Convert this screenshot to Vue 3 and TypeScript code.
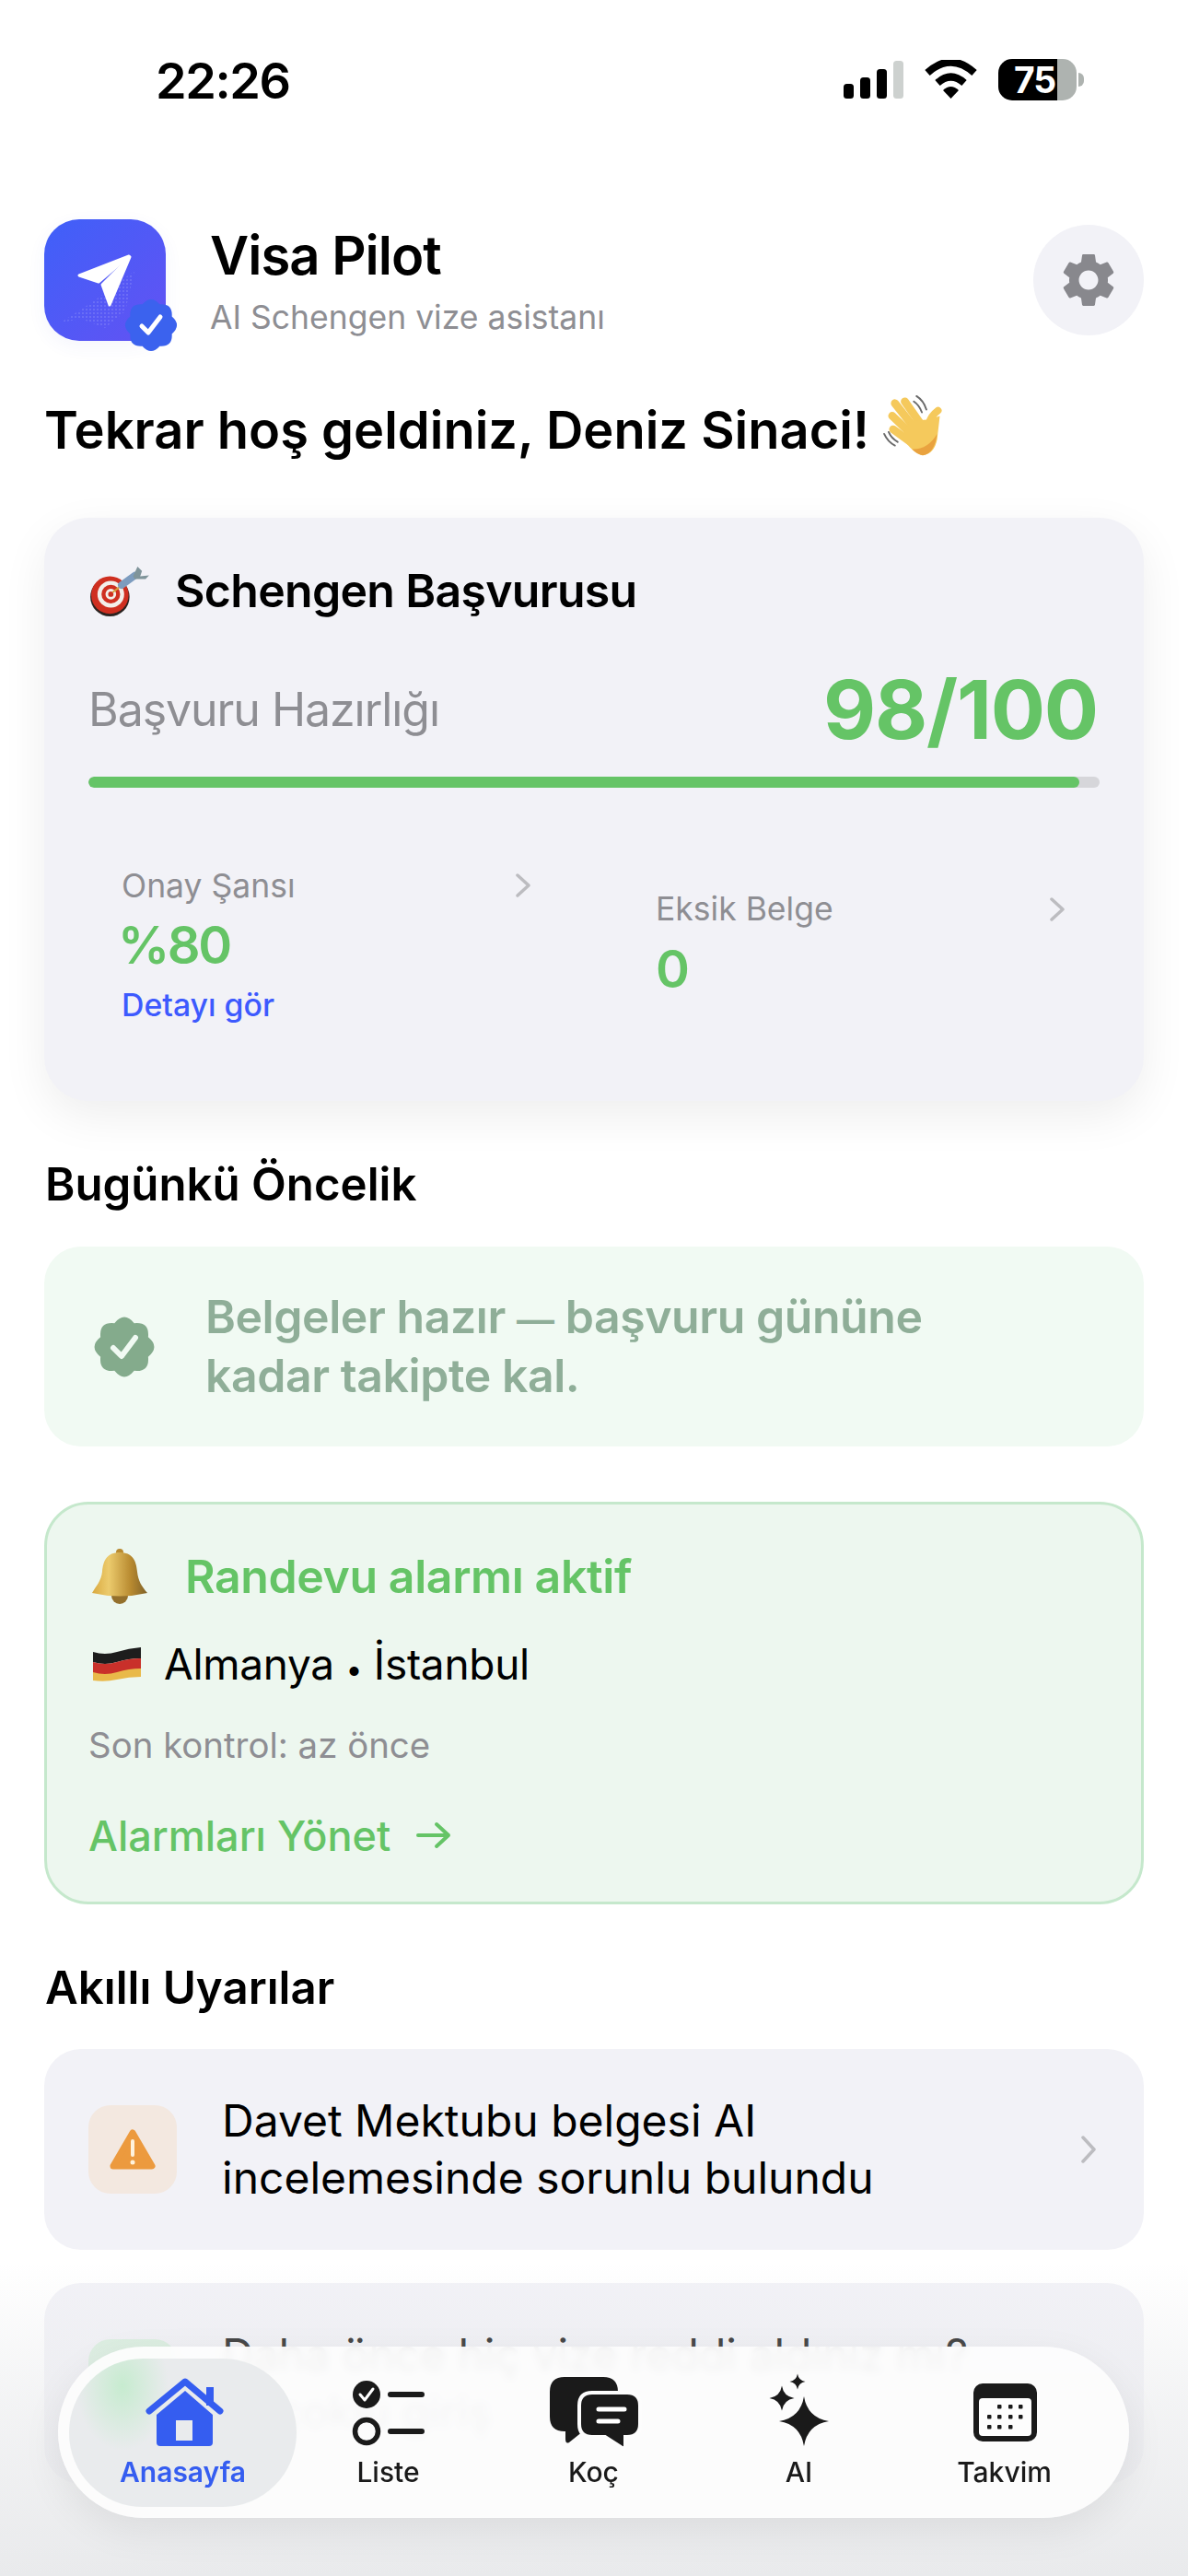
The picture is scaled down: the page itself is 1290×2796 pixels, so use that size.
<template>
  <div class="page">
    <div class="status-bar">
      <span class="time">22:26</span>
      <div class="status-icons">
        <svg class="signal" viewBox="0 0 65 41">
          <rect x="0" y="25" width="11" height="16" rx="3.5" fill="#000" />
          <rect x="18" y="18" width="11" height="23" rx="3.5" fill="#000" />
          <rect x="36" y="9" width="11" height="32" rx="3.5" fill="#000" />
          <rect x="54" y="0" width="11" height="41" rx="3.5" fill="#cdd1cf" />
        </svg>
        <svg class="wifi" viewBox="0 0 57 42">
          <path d="M3 14 Q28.5 -9 54 14" fill="none" stroke="#000" stroke-width="8" />
          <path d="M14 25 Q28.5 12 43 25" fill="none" stroke="#000" stroke-width="8" />
          <path d="M20 33 Q28.5 25 37 33 L28.5 42 Z" fill="#000" />
        </svg>
        <div class="battery">
          <span class="battery-num">75</span>
          <i class="battery-tip"></i>
        </div>
      </div>
    </div>

    <header class="header">
      <div class="logo">
        <svg class="logo-art" viewBox="0 0 132 132">
          <defs>
            <linearGradient id="logoBg" x1="0" y1="0" x2="1" y2="1">
              <stop offset="0" stop-color="#3f60f9" />
              <stop offset="1" stop-color="#6352f3" />
            </linearGradient>
            <pattern id="logoDots" width="4" height="4" patternUnits="userSpaceOnUse">
              <circle cx="2" cy="2" r="0.7" fill="#fff" />
            </pattern>
          </defs>
          <rect width="132" height="132" rx="38" fill="url(#logoBg)" />
          <path d="M18 112 L55 88 L98 56 L88 100 L66 118 L40 108 Z" fill="url(#logoDots)" opacity="0.35" />
          <path d="M92 40 L38 61 L59 68 Z" fill="#fff" stroke="#fff" stroke-width="3" stroke-linejoin="round" />
          <path d="M93 41 L63 71 L71 93 Z" fill="#fff" stroke="#fff" stroke-width="3" stroke-linejoin="round" />
        </svg>
        <svg class="logo-badge" viewBox="0 0 60 60">
          <path :d="scallop(30, 30, 29, 24.5)" fill="#3b62ee" />
          <path d="M20 31 L27 38 L40 21" fill="none" stroke="#fff" stroke-width="5" stroke-linecap="round" stroke-linejoin="round" />
        </svg>
      </div>
      <div class="brand">
        <div class="brand-name">Visa Pilot</div>
        <div class="brand-sub">AI Schengen vize asistanı</div>
      </div>
      <button class="settings">
        <svg viewBox="0 0 24 24" class="gear">
          <path
            fill="#88888d"
            d="M19.14 12.94c.04-.3.06-.61.06-.94 0-.32-.02-.64-.07-.94l2.03-1.58c.18-.14.23-.41.12-.61l-1.92-3.32c-.12-.22-.37-.29-.59-.22l-2.39.96c-.5-.38-1.03-.7-1.62-.94l-.36-2.54c-.04-.24-.24-.41-.48-.41h-3.84c-.24 0-.43.17-.47.41l-.36 2.54c-.59.24-1.13.57-1.62.94l-2.39-.96c-.22-.08-.47 0-.59.22L2.74 8.87c-.12.21-.08.47.12.61l2.03 1.58c-.05.3-.09.63-.09.94s.02.64.07.94l-2.03 1.58c-.18.14-.23.41-.12.61l1.92 3.32c.12.22.37.29.59.22l2.39-.96c.5.38 1.03.7 1.62.94l.36 2.54c.05.24.24.41.48.41h3.84c.24 0 .44-.17.47-.41l.36-2.54c.59-.24 1.13-.56 1.62-.94l2.39.96c.22.08.47 0 .59-.22l1.92-3.32c.12-.22.07-.47-.12-.61l-2.01-1.58zM12 15.6c-1.98 0-3.6-1.62-3.6-3.6s1.62-3.6 3.6-3.6 3.6 1.62 3.6 3.6-1.62 3.6-3.6 3.6z"
          />
        </svg>
      </button>
    </header>

    <h1 class="greeting">
      <span>Tekrar hoş geldiniz, Deniz Sinaci!</span>
      <svg class="wave" viewBox="0 0 90 80">
        <g fill="none" stroke="#6a6a6a" stroke-width="2" stroke-linecap="round">
          <path d="M38 2 Q46 7 49 17" />
          <path d="M35 8 Q41 12 44 20" />
          <path d="M2 44 Q6 53 14 57" />
          <path d="M7 42 Q10 49 17 53" />
        </g>
        <g fill="none" stroke="#f5c95c" stroke-width="9" stroke-linecap="round">
          <path d="M25 8 L42 32" />
          <path d="M14 10 L33 34" />
          <path d="M11 24 L30 42" />
          <path d="M12 39 L30 52" />
          <path d="M52 32 Q54 24 62 18" stroke-width="8" />
        </g>
        <path d="M30 30 L52 28 L64 24 L61 50 Q58 66 45 68 Q34 66 22 48 Z" fill="#f5c95c" />
        <path d="M61 44 Q58 66 45 68 Q39 67 33 61 Q50 62 61 44 Z" fill="#e9a23f" />
      </svg>
    </h1>

    <section class="card main-card">
      <div class="main-title">
        <svg class="target" viewBox="0 0 66 60">
          <circle cx="22" cy="36" r="22" fill="#2b2320" />
          <circle cx="22" cy="34" r="21" fill="#cf2f20" />
          <circle cx="23" cy="33" r="15" fill="#f3efea" />
          <circle cx="23" cy="33" r="10.5" fill="#cf2f20" />
          <circle cx="23" cy="33" r="6" fill="#f3efea" />
          <circle cx="23" cy="33" r="3" fill="#cf2f20" />
          <path d="M25 31 L38 21" stroke="#d8a23c" stroke-width="2" />
          <path d="M35 23 L50 12" stroke="#7d9cbf" stroke-width="8" stroke-linecap="round" />
          <path d="M48 13 L53 2 L58 7 L56 13 L66 12 L62 16 L50 16 Z" fill="#7f949a" />
        </svg>
        <h2>Schengen Başvurusu</h2>
      </div>
      <div class="readiness">
        <span class="readiness-label">Başvuru Hazırlığı</span>
        <span class="readiness-score">{{ score }}/100</span>
      </div>
      <div class="progress">
        <div class="progress-fill" :style="{ width: score + '%' }"></div>
      </div>
      <div class="stats">
        <div class="stat">
          <div class="stat-label">
            <span>Onay Şansı</span>
            <svg class="chevron" viewBox="0 0 16 26"><path d="M2 2 L14 13 L2 24" /></svg>
          </div>
          <div class="stat-value stat-percent">%80</div>
          <div class="stat-link">Detayı gör</div>
        </div>
        <div class="stat">
          <div class="stat-label">
            <span>Eksik Belge</span>
            <svg class="chevron" viewBox="0 0 16 26"><path d="M2 2 L14 13 L2 24" /></svg>
          </div>
          <div class="stat-value">0</div>
        </div>
      </div>
    </section>

    <h3 class="section-title">Bugünkü Öncelik</h3>
    <section class="card priority">
      <svg class="priority-icon" viewBox="0 0 68 68">
        <path :d="scallop(34, 34, 33.5, 28)" fill="#84ab8c" />
        <path d="M22 35 L31 44 L46 24" fill="none" stroke="#f1faf3" stroke-width="6" stroke-linecap="round" stroke-linejoin="round" />
      </svg>
      <p>Belgeler hazır <span class="dash">—</span> başvuru gününe<br />kadar takipte kal.</p>
    </section>

    <section class="card alarm">
      <div class="alarm-head">
        <svg class="bell" viewBox="0 0 64 62">
          <defs>
            <linearGradient id="bellGold" x1="0" y1="0" x2="1" y2="0">
              <stop offset="0" stop-color="#d9a93f" />
              <stop offset="0.3" stop-color="#eccb6d" />
              <stop offset="0.7" stop-color="#b88a30" />
              <stop offset="1" stop-color="#7f6128" />
            </linearGradient>
          </defs>
          <circle cx="32" cy="52" r="9" fill="#94702c" />
          <circle cx="32" cy="5" r="4" fill="#b88a30" />
          <path d="M32 5 C18 5 14 14 13 26 C12 36 6 42 2 49 Q32 56 62 49 C56 42 52 36 51 26 C50 14 46 5 32 5 Z" fill="url(#bellGold)" />
        </svg>
        <span>Randevu alarmı aktif</span>
      </div>
      <div class="alarm-place">
        <svg class="flag" viewBox="0 0 54 38">
          <path d="M1 6 Q14 10 27 6 T53 1 V13 Q40 13 27 17 T1 17 Z" fill="#1d1d1d" />
          <path d="M1 17 Q14 21 27 17 T53 13 V25 Q40 25 27 29 T1 29 Z" fill="#c9302a" />
          <path d="M1 28 Q14 32 27 28 T53 24 V33 Q40 33 27 36 T1 37 Z" fill="#e9b949" />
        </svg>
        <span>Almanya <span class="dot">•</span> İstanbul</span>
      </div>
      <div class="alarm-check">Son kontrol: az önce</div>
      <div class="alarm-link">
        <span>Alarmları Yönet</span>
        <svg class="arrow" viewBox="0 0 38 30">
          <path d="M2 15 H35 M22 3 L35 15 L22 27" fill="none" stroke="#65c466" stroke-width="4" stroke-linecap="round" stroke-linejoin="round" />
        </svg>
      </div>
    </section>

    <h3 class="section-title">Akıllı Uyarılar</h3>
    <section class="card alert">
      <div class="alert-icon">
        <svg viewBox="0 0 50 46" class="warn">
          <path d="M25 5 L46 41 H4 Z" fill="#ec9a3e" stroke="#ec9a3e" stroke-width="7" stroke-linejoin="round" />
          <path d="M25 14 V29" stroke="#fff3dd" stroke-width="4" stroke-linecap="round" />
          <circle cx="25" cy="37" r="2.5" fill="#fff3dd" />
        </svg>
      </div>
      <p>Davet Mektubu belgesi AI<br />incelemesinde sorunlu bulundu</p>
      <svg class="chevron alert-chevron" viewBox="0 0 16 30"><path d="M2 2 L14 15 L2 28" /></svg>
    </section>
    <section class="card alert">
      <div class="alert-icon alert-icon-green"></div>
      <p>Daha önce hiç vize reddi aldınız mı?<br />AI çoklu giriş</p>
    </section>

    <div class="bottom-fade"></div>

    <nav class="tabbar">
      <div class="tab tab-active">
        <svg viewBox="0 0 100 84" class="tab-icon">
          <rect x="75" y="16" width="8" height="20" fill="#355df0" />
          <path d="M52 20 L82 46 V76 Q82 80 78 80 H25 Q21 80 21 76 V46 Z" fill="#355df0" />
          <rect x="42" y="52" width="18" height="22" fill="#e9ebed" />
          <path d="M13 42 L52 10 L90 42" fill="none" stroke="#355df0" stroke-width="7" stroke-linecap="round" stroke-linejoin="round" />
        </svg>
        <span>Anasayfa</span>
      </div>
      <div class="tab">
        <svg viewBox="0 0 100 84" class="tab-icon">
          <circle cx="26" cy="24" r="15" fill="#1a1a1a" />
          <path d="M19 24 L24 30 L33 18" fill="none" stroke="#fff" stroke-width="3" stroke-linecap="round" stroke-linejoin="round" />
          <circle cx="26" cy="64" r="12.5" fill="none" stroke="#1a1a1a" stroke-width="5.5" />
          <path d="M52 24 H86 M52 64 H86" stroke="#1a1a1a" stroke-width="6" stroke-linecap="round" />
        </svg>
        <span>Liste</span>
      </div>
      <div class="tab">
        <svg viewBox="0 0 100 84" class="tab-icon">
          <path d="M18 5 H60 Q76 5 76 21 V48 Q76 64 60 64 H38 L23 76 Q19 78 19 72 V64 H18 Q2 64 2 48 V21 Q2 5 18 5 Z" fill="#1a1a1a" />
          <path d="M48 22 H86 Q100 22 100 36 V56 Q100 70 86 70 H84 V79 Q84 84 79 81 L62 70 H48 Q34 70 34 56 V36 Q34 22 48 22 Z" fill="#1a1a1a" stroke="#fdfdfd" stroke-width="4" />
          <path d="M55 40 H83 M55 53 H76" stroke="#fff" stroke-width="5" stroke-linecap="round" />
        </svg>
        <span>Koç</span>
      </div>
      <div class="tab">
        <svg viewBox="0 0 100 84" class="tab-icon">
          <path :d="star(55, 53, 27)" fill="#1a1a1a" />
          <path :d="star(31, 28, 13.5)" fill="#1a1a1a" />
          <path :d="star(48, 10, 8.5)" fill="#1a1a1a" />
        </svg>
        <span>AI</span>
      </div>
      <div class="tab">
        <svg viewBox="0 0 100 84" class="tab-icon">
          <rect x="16" y="12" width="69" height="63" rx="10" fill="#1a1a1a" />
          <rect x="22" y="28" width="57" height="41" rx="4" fill="#fdfdfd" />
          <rect
            v-for="d in calendarDots"
            :key="d.x + '-' + d.y"
            :x="d.x - 2"
            :y="d.y - 2"
            width="4.5"
            height="4.5"
            rx="1"
            fill="#1a1a1a"
          />
        </svg>
        <span>Takvim</span>
      </div>
    </nav>
  </div>
</template>

<script setup lang="ts">
const score = 98;

const calendarDots = [
  { x: 44, y: 37 },
  { x: 56, y: 37 },
  { x: 67, y: 37 },
  { x: 33, y: 48 },
  { x: 44, y: 48 },
  { x: 56, y: 48 },
  { x: 67, y: 48 },
  { x: 33, y: 59 },
  { x: 44, y: 59 },
  { x: 56, y: 59 },
];

// verified-style badge outline, 8 soft bumps
function scallop(cx: number, cy: number, outer: number, inner: number): string {
  const n = 8;
  const ctrl = outer * 2 - inner;
  const at = (r: number, a: number) => `${cx + r * Math.cos(a)} ${cy + r * Math.sin(a)}`;
  const step = (Math.PI * 2) / n;
  let d = `M${at(inner, -Math.PI / 2 - step / 2)}`;
  for (let i = 0; i < n; i++) {
    const a = i * step - Math.PI / 2;
    d += `Q${at(ctrl, a)} ${at(inner, a + step / 2)}`;
  }
  return d + "Z";
}

function star(cx: number, cy: number, r: number): string {
  const k = r * 0.14;
  return (
    `M${cx} ${cy - r}Q${cx + k} ${cy - k} ${cx + r} ${cy}` +
    `Q${cx + k} ${cy + k} ${cx} ${cy + r}` +
    `Q${cx - k} ${cy + k} ${cx - r} ${cy}` +
    `Q${cx - k} ${cy - k} ${cx} ${cy - r}Z`
  );
}
</script>

<style scoped>
.page {
  position: relative;
  width: 1290px;
  height: 2796px;
  overflow: hidden;
  box-sizing: border-box;
  padding: 0 48px;
  background: #fff;
  font-family: Inter, "Liberation Sans", sans-serif;
  color: #000;
}

.status-bar {
  height: 237px;
  box-sizing: border-box;
  padding: 57px 73px 0 121px;
  display: flex;
  justify-content: space-between;
  align-items: flex-start;
}
.time {
  font-size: 54px;
  line-height: 62px;
  font-weight: 600;
  letter-spacing: -1.4px;
}
.status-icons {
  display: flex;
  align-items: flex-start;
  padding-top: 8px;
}
.signal {
  width: 65px;
  height: 41px;
  margin-top: 1px;
}
.wifi {
  width: 57px;
  height: 42px;
  margin-left: 23px;
}
.battery {
  position: relative;
  width: 85px;
  height: 45px;
  margin-left: 23px;
  margin-top: -1px;
  border-radius: 15px;
  background: linear-gradient(90deg, #000 75%, #aeb3b0 75%);
  display: flex;
  align-items: center;
}
.battery-num {
  padding-left: 17px;
  color: #fff;
  font-size: 39px;
  font-weight: 700;
  line-height: 45px;
  letter-spacing: -1px;
}
.battery-tip {
  position: absolute;
  left: 87px;
  top: 15px;
  width: 6px;
  height: 15px;
  border-radius: 0 8px 8px 0;
  background: #aeb3b0;
}

.header {
  display: flex;
  align-items: center;
  height: 133px;
}
.logo {
  position: relative;
  width: 132px;
  height: 132px;
  flex: none;
  border-radius: 38px;
  box-shadow: 0 6px 20px rgba(70, 80, 200, 0.06);
}
.logo-art {
  display: block;
  width: 132px;
  height: 132px;
}
.logo-badge {
  position: absolute;
  left: 86px;
  top: 85px;
  width: 60px;
  height: 60px;
}
.brand {
  margin-left: 48px;
  flex: 1;
}
.brand-name {
  font-size: 58px;
  line-height: 70px;
  font-weight: 600;
  letter-spacing: -1px;
}
.brand-sub {
  margin-top: 12px;
  font-size: 35.5px;
  line-height: 42px;
  color: #8e8e93;
}
.settings {
  width: 120px;
  height: 120px;
  border: none;
  border-radius: 50%;
  background: #f2f2f7;
  padding: 0;
  display: flex;
  align-items: center;
  justify-content: center;
}
.gear {
  width: 70px;
  height: 70px;
}

.greeting {
  margin: 61px 0 0;
  height: 72px;
  display: flex;
  align-items: center;
  gap: 14px;
  font-size: 56px;
  line-height: 72px;
  font-weight: 600;
}
.wave {
  width: 88px;
  height: 78px;
  flex: none;
}

.card {
  box-sizing: border-box;
  background: #f2f2f7;
}
.main-card {
  height: 633px;
  margin-top: 59px;
  padding: 50px 48px 0;
  border-radius: 48px;
  box-shadow: 0 16px 50px rgba(0, 0, 0, 0.07);
}
.main-title {
  display: flex;
  align-items: center;
  height: 60px;
}
.target {
  width: 64px;
  height: 58px;
  margin-left: 2px;
  flex: none;
}
.main-title h2 {
  margin: 0 0 0 28px;
  padding-bottom: 3px;
  font-size: 50px;
  line-height: 60px;
  font-weight: 600;
  letter-spacing: -0.7px;
}
.readiness {
  margin-top: 48px;
  height: 100px;
  display: flex;
  justify-content: space-between;
  align-items: center;
}
.readiness-label {
  font-size: 50px;
  color: #8e8e93;
  letter-spacing: -1.05px;
}
.readiness-score {
  padding-right: 2px;
  font-size: 88px;
  font-weight: 700;
  color: #65c466;
  letter-spacing: -1.2px;
}
.progress {
  margin-top: 23px;
  height: 12px;
  border-radius: 6px;
  background: #d6d6da;
  overflow: hidden;
}
.progress-fill {
  height: 100%;
  border-radius: 6px;
  background: #65c466;
}
.stats {
  margin-top: 61px;
  display: grid;
  grid-template-columns: 518px 518px;
  column-gap: 62px;
}
.stat {
  height: 219px;
  box-sizing: border-box;
  padding: 0 38px 0 36px;
  display: flex;
  flex-direction: column;
  justify-content: center;
}
.stat-label {
  display: flex;
  justify-content: space-between;
  align-items: center;
  height: 42px;
  font-size: 35.5px;
  color: #8e8e93;
}
.stat-value {
  margin-top: 10px;
  font-size: 56px;
  line-height: 68px;
  font-weight: 600;
  color: #65c466;
}
.stat-percent {
  margin-left: -4px;
  letter-spacing: -2.4px;
}
.stat-link {
  margin-top: 11px;
  font-size: 33.8px;
  line-height: 40px;
  font-weight: 500;
  color: #3d5afe;
}
.chevron {
  width: 16px;
  height: 26px;
  flex: none;
}
.chevron path {
  fill: none;
  stroke: #bcbcc0;
  stroke-width: 3.5;
  stroke-linecap: round;
  stroke-linejoin: round;
}

.section-title {
  margin: 63px 0 0;
  padding: 0 0 4px 1px;
  font-size: 49.2px;
  line-height: 54px;
  font-weight: 600;
}
.priority {
  margin-top: 37px;
  height: 217px;
  padding-left: 53px;
  border-radius: 40px;
  background: #f1faf3;
  display: flex;
  align-items: center;
  gap: 54px;
}
.priority-icon {
  width: 68px;
  height: 68px;
  flex: none;
}
.priority p {
  margin: 0;
  font-size: 50px;
  line-height: 61px;
  font-weight: 600;
  color: #8fae98;
  letter-spacing: -0.45px;
}
.dash {
  font-size: 41px;
}
.alarm {
  margin-top: 60px;
  height: 437px;
  padding: 48px 45px 0;
  border: 3px solid #c5e8cc;
  border-radius: 48px;
  background: #edf7ef;
}
.alarm-head {
  display: flex;
  align-items: center;
  height: 60px;
  font-size: 50px;
  font-weight: 600;
  color: #65c466;
  letter-spacing: -0.4px;
}
.bell {
  width: 64px;
  height: 62px;
  margin: 0 39px 0 2px;
  flex: none;
}
.alarm-place {
  margin-top: 37px;
  height: 56px;
  padding-bottom: 2px;
  display: flex;
  align-items: center;
  font-size: 46px;
  letter-spacing: -0.3px;
}
.dot {
  font-size: 32px;
}
.flag {
  width: 54px;
  height: 38px;
  margin: 0 24px 0 4px;
  flex: none;
}
.alarm-check {
  margin-top: 35px;
  font-size: 38.4px;
  line-height: 46px;
  color: #8e8e93;
}
.alarm-link {
  margin-top: 48px;
  height: 54px;
  display: flex;
  align-items: center;
  font-size: 45px;
  font-weight: 500;
  color: #65c466;
}
.arrow {
  width: 38px;
  height: 30px;
  margin-left: 28px;
}
.alert {
  position: relative;
  margin-top: 36px;
  height: 218px;
  padding-left: 48px;
  border-radius: 40px;
  display: flex;
  align-items: center;
  gap: 49px;
}
.alert-icon {
  width: 96px;
  height: 96px;
  flex: none;
  border-radius: 24px;
  background: #f3e8e0;
  display: flex;
  align-items: center;
  justify-content: center;
}
.alert-icon-green {
  background: #d6efdc;
}
.warn {
  width: 50px;
  height: 46px;
}
.alert p {
  margin: 0;
  font-size: 48px;
  line-height: 62px;
}
.alert-chevron {
  position: absolute;
  right: 52px;
  top: 94px;
  width: 16px;
  height: 30px;
}

.bottom-fade {
  position: absolute;
  left: 0;
  right: 0;
  bottom: 0;
  height: 340px;
  background: linear-gradient(180deg, rgba(233, 234, 236, 0) 0%, rgba(233, 234, 236, 0.55) 45%, #e9eaec 100%);
}
.tabbar {
  position: absolute;
  left: 63px;
  top: 2547px;
  width: 1163px;
  height: 186px;
  box-sizing: border-box;
  padding: 0 24px;
  border-radius: 93px;
  background: rgba(253, 253, 253, 0.93);
  backdrop-filter: blur(5px);
  box-shadow: 0 14px 44px rgba(0, 0, 0, 0.07);
  display: grid;
  grid-template-columns: repeat(5, 223px);
}
.tab {
  position: relative;
  display: flex;
  flex-direction: column;
  align-items: center;
  padding-top: 28px;
  font-size: 30px;
  line-height: 36px;
  font-weight: 500;
  color: #1a1a1a;
}
.tab span {
  position: relative;
  margin-top: 6px;
}
.tab-icon {
  position: relative;
  width: 100px;
  height: 84px;
  overflow: visible;
}
.tab-active {
  color: #355df0;
  font-weight: 600;
}
.tab-active::before {
  content: "";
  position: absolute;
  left: -12px;
  top: 13px;
  width: 247px;
  height: 161px;
  border-radius: 80px;
  background:
    radial-gradient(ellipse 50px 70px at 58px 30px, rgba(190, 235, 200, 0.8), rgba(190, 235, 200, 0)),
    #e9ebed;
}
</style>

<style>
html,
body {
  margin: 0;
  background: #fff;
}
</style>
